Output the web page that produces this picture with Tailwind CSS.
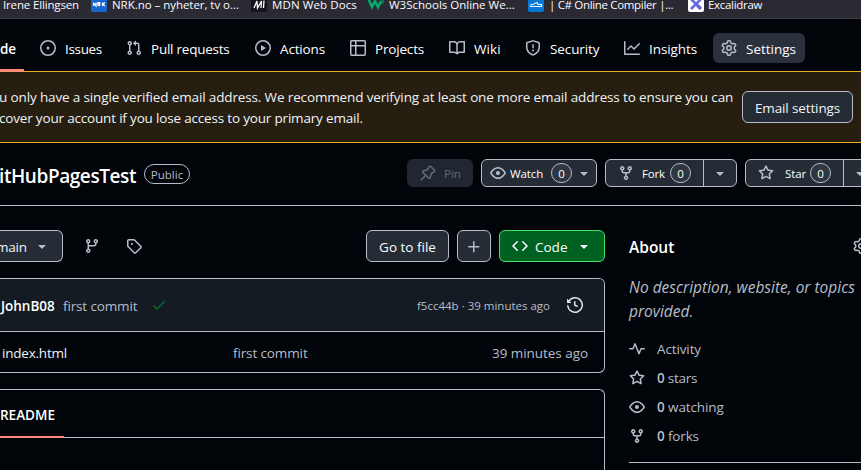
<!DOCTYPE html>
<html lang="en">
<head>
<meta charset="utf-8">
<title>GitHubPagesTest</title>
<script src="https://cdn.jsdelivr.net/npm/@tailwindcss/browser@4"></script>
</head>
<body class="w-[861px] h-[470px] overflow-hidden bg-[#010409] text-white font-['Open_Sans','Noto_Sans',sans-serif] text-[13.5px] leading-5 whitespace-nowrap">
<svg class="hidden">
  <symbol id="issue" viewBox="0 0 16 16"><path d="M8 9.5a1.5 1.5 0 1 0 0-3 1.5 1.5 0 0 0 0 3Z"/><path d="M8 0a8 8 0 1 1 0 16A8 8 0 0 1 8 0ZM1.5 8a6.500 6.500 0 1 0 13 0 6.500 6.500 0 0 0-13 0Z"/></symbol>
  <symbol id="pull" viewBox="0 0 16 16"><path d="M1.5 3.250a2.250 2.250 0 1 1 3 2.122v5.256a2.251 2.251 0 1 1-1.500 0V5.372A2.250 2.250 0 0 1 1.500 3.250Zm5.677-.177L9.573.677A.25.25 0 0 1 10 .854V2.500h1A2.500 2.500 0 0 1 13.500 5v5.628a2.251 2.251 0 1 1-1.500 0V5a1 1 0 0 0-1-1h-1v1.646a.25.25 0 0 1-.427.177L7.177 3.427a.25.25 0 0 1 0-.354ZM3.750 2.500a.75.75 0 1 0 0 1.500.75.75 0 0 0 0-1.500Zm0 9.500a.75.75 0 1 0 0 1.500.75.75 0 0 0 0-1.500Zm8.250.75a.75.75 0 1 0 1.500 0 .75.75 0 0 0-1.500 0Z"/></symbol>
  <symbol id="play" viewBox="0 0 16 16"><path d="M8 0a8 8 0 1 1 0 16A8 8 0 0 1 8 0ZM1.500 8a6.500 6.500 0 1 0 13 0 6.500 6.500 0 0 0-13 0Zm4.879-2.773 4.264 2.559a.25.25 0 0 1 0 .428l-4.264 2.559A.25.25 0 0 1 6 10.559V5.442a.25.25 0 0 1 .379-.215Z"/></symbol>
  <symbol id="table" viewBox="0 0 16 16"><path d="M0 1.750C0 .784.784 0 1.750 0h12.500C15.216 0 16 .784 16 1.750v12.500A1.750 1.750 0 0 1 14.250 16H1.750A1.750 1.750 0 0 1 0 14.250ZM6.500 6.500v8h7.750a.25.25 0 0 0 .25-.25V6.500Zm8-1.500V1.750a.25.25 0 0 0-.25-.25H6.500V5Zm-13 1.500v7.750c0 .138.112.25.25.25H5v-8ZM5 5V1.500H1.750a.25.25 0 0 0-.25.25V5Z"/></symbol>
  <symbol id="book" viewBox="0 0 16 16"><path d="M0 1.750A.75.75 0 0 1 .75 1h4.253c1.227 0 2.317.59 3 1.501A3.743 3.743 0 0 1 11.006 1h4.245a.75.75 0 0 1 .75.75v10.500a.75.75 0 0 1-.75.75h-4.507a2.250 2.250 0 0 0-1.591.659l-.622.621a.75.75 0 0 1-1.060 0l-.622-.621A2.250 2.250 0 0 0 5.258 13H.75a.75.75 0 0 1-.75-.75Zm7.251 10.324.004-5.073-.002-2.253A2.250 2.250 0 0 0 5.003 2.500H1.500v9h3.757a3.750 3.750 0 0 1 1.994.574ZM8.755 4.750l-.004 7.322a3.752 3.752 0 0 1 1.992-.572H14.500v-9h-3.495a2.250 2.250 0 0 0-2.250 2.250Z"/></symbol>
  <symbol id="shield" viewBox="0 0 16 16"><path d="M7.467.133a1.748 1.748 0 0 1 1.066 0l5.250 1.680A1.750 1.750 0 0 1 15 3.480V7c0 1.566-.32 3.182-1.303 4.682-.983 1.498-2.585 2.813-5.032 3.855a1.697 1.697 0 0 1-1.330 0c-2.447-1.042-4.049-2.357-5.032-3.855C1.320 10.182 1 8.566 1 7V3.480a1.755 1.755 0 0 1 1.217-1.667Zm.61 1.429a.25.25 0 0 0-.153 0l-5.250 1.680a.25.25 0 0 0-.174.238V7c0 1.358.275 2.666 1.057 3.860.784 1.194 2.121 2.340 4.366 3.297a.196.196 0 0 0 .154 0c2.245-.956 3.582-2.104 4.366-3.298C13.225 9.666 13.500 8.360 13.500 7V3.480a.251.251 0 0 0-.174-.237l-5.250-1.680ZM8.750 4.750v3a.75.75 0 0 1-1.500 0v-3a.75.75 0 0 1 1.500 0ZM9 10.500a1 1 0 1 1-2 0 1 1 0 0 1 2 0Z"/></symbol>
  <symbol id="graph" viewBox="0 0 16 16"><path d="M1.500 1.750V13.500h13.750a.75.75 0 0 1 0 1.500H.75a.75.75 0 0 1-.75-.75V1.750a.75.75 0 0 1 1.500 0Zm14.280 2.530-5.250 5.250a.75.75 0 0 1-1.060 0L7 7.060 4.280 9.780a.751.751 0 0 1-1.060-1.060l3.250-3.250a.75.75 0 0 1 1.060 0L10 7.940l4.720-4.720a.751.751 0 0 1 1.060 1.060Z"/></symbol>
  <symbol id="gear" viewBox="0 0 16 16"><path d="M8 0a8.200 8.200 0 0 1 .701.031C9.444.095 9.990.645 10.160 1.290l.288 1.107c.018.066.079.158.212.224.231.114.454.243.668.386.123.082.233.090.299.071l1.103-.303c.644-.176 1.392.021 1.820.63.270.385.506.792.704 1.218.315.675.111 1.422-.364 1.891l-.814.806c-.049.048-.098.147-.088.294.016.257.016.515 0 .772-.010.147.038.246.088.294l.814.806c.475.469.679 1.216.364 1.891a7.977 7.977 0 0 1-.704 1.217c-.428.610-1.176.807-1.820.630l-1.102-.302c-.067-.019-.177-.011-.300.071a5.909 5.909 0 0 1-.668.386c-.133.066-.194.158-.211.224l-.290 1.106c-.168.646-.715 1.196-1.458 1.260a8.006 8.006 0 0 1-1.402 0c-.743-.064-1.289-.614-1.458-1.260l-.289-1.106c-.018-.066-.079-.158-.212-.224a5.738 5.738 0 0 1-.668-.386c-.123-.082-.233-.090-.299-.071l-1.103.303c-.644.176-1.392-.021-1.820-.630a8.120 8.120 0 0 1-.704-1.218c-.315-.675-.111-1.422.363-1.891l.815-.806c.050-.048.098-.147.088-.294a6.214 6.214 0 0 1 0-.772c.010-.147-.038-.246-.088-.294l-.815-.806C.635 6.045.431 5.298.746 4.623a7.920 7.920 0 0 1 .704-1.217c.428-.610 1.176-.807 1.820-.630l1.102.302c.067.019.177.011.300-.071.214-.143.437-.272.668-.386.133-.066.194-.158.211-.224l.290-1.106C6.009.645 6.556.095 7.299.030 7.530.010 7.764 0 8 0Zm-.571 1.525c-.036.003-.108.036-.137.146l-.289 1.105c-.147.561-.549.967-.998 1.189-.173.086-.340.183-.500.290-.417.278-.970.423-1.529.270l-1.103-.303c-.109-.030-.175.016-.195.045-.220.312-.412.644-.573.990-.014.031-.021.110.059.190l.815.806c.411.406.562.957.530 1.456a4.709 4.709 0 0 0 0 .582c.032.499-.119 1.050-.530 1.456l-.815.806c-.081.080-.073.159-.059.190.162.346.353.677.573.989.020.030.085.076.195.046l1.102-.303c.560-.153 1.113-.008 1.530.270.161.107.328.204.501.290.447.222.850.629.997 1.189l.289 1.105c.029.109.101.143.137.146a6.600 6.600 0 0 0 1.142 0c.036-.003.108-.036.137-.146l.289-1.105c.147-.561.549-.967.998-1.189.173-.086.340-.183.500-.290.417-.278.970-.423 1.529-.270l1.103.303c.109.029.175-.016.195-.045.220-.313.411-.644.573-.990.014-.031.021-.110-.059-.190l-.815-.806c-.411-.406-.562-.957-.530-1.456a4.709 4.709 0 0 0 0-.582c-.032-.499.119-1.050.530-1.456l.815-.806c.081-.080.073-.159.059-.190a6.464 6.464 0 0 0-.573-.989c-.020-.030-.085-.076-.195-.046l-1.102.303c-.560.153-1.113.008-1.530-.270a4.440 4.440 0 0 0-.501-.290c-.447-.222-.850-.629-.997-1.189l-.289-1.105c-.029-.110-.101-.143-.137-.146a6.600 6.600 0 0 0-1.142 0ZM11 8a3 3 0 1 1-6 0 3 3 0 0 1 6 0ZM9.500 8a1.500 1.500 0 1 0-3.001.001A1.500 1.500 0 0 0 9.500 8Z"/></symbol>
  <symbol id="pin" viewBox="0 0 16 16"><path d="m11.294.984 3.722 3.722a1.750 1.750 0 0 1-.504 2.826l-1.327.613a3.089 3.089 0 0 0-1.707 2.084l-.584 2.454c-.317 1.332-1.972 1.800-2.940.832L5.750 11.311 1.780 15.280a.749.749 0 1 1-1.060-1.060l3.969-3.970-2.204-2.204c-.968-.968-.5-2.623.832-2.940l2.454-.584a3.080 3.080 0 0 0 2.084-1.707l.613-1.327a1.750 1.750 0 0 1 2.826-.504ZM6.283 9.723l2.732 2.731a.25.25 0 0 0 .420-.119l.584-2.454a4.586 4.586 0 0 1 2.537-3.098l1.328-.613a.25.25 0 0 0 .072-.404l-3.722-3.722a.25.25 0 0 0-.404.072l-.613 1.328a4.584 4.584 0 0 1-3.098 2.537l-2.454.584a.25.25 0 0 0-.119.420l2.731 2.732Z"/></symbol>
  <symbol id="eye" viewBox="0 0 16 16"><path d="M8 2c1.981 0 3.671.992 4.933 2.078 1.270 1.091 2.187 2.345 2.637 3.023a1.620 1.620 0 0 1 0 1.798c-.450.678-1.367 1.932-2.637 3.023C11.670 13.008 9.981 14 8 14c-1.981 0-3.671-.992-4.933-2.078C1.797 10.830.880 9.576.430 8.898a1.620 1.620 0 0 1 0-1.798c.450-.677 1.367-1.931 2.637-3.022C4.330 2.992 6.019 2 8 2ZM1.679 7.932a.120.120 0 0 0 0 .136c.411.622 1.241 1.750 2.366 2.717C5.176 11.758 6.527 12.500 8 12.500c1.473 0 2.825-.742 3.955-1.715 1.124-.967 1.954-2.096 2.366-2.717a.120.120 0 0 0 0-.136c-.412-.621-1.242-1.750-2.366-2.717C10.824 4.242 9.473 3.500 8 3.500c-1.473 0-2.825.742-3.955 1.715-1.124.967-1.954 2.096-2.366 2.717ZM8 10a2 2 0 1 1-.001-3.999A2 2 0 0 1 8 10Z"/></symbol>
  <symbol id="fork" viewBox="0 0 16 16"><path d="M5 5.372v.878c0 .414.336.75.75.75h4.500a.75.75 0 0 0 .75-.75v-.878a2.250 2.250 0 1 1 1.500 0v.878a2.250 2.250 0 0 1-2.250 2.250h-1.500v2.128a2.251 2.251 0 1 1-1.500 0V8.500h-1.500A2.250 2.250 0 0 1 3.500 6.250v-.878a2.250 2.250 0 1 1 1.500 0ZM5 3.250a.75.75 0 1 0-1.500 0 .75.75 0 0 0 1.500 0Zm6.750.75a.75.75 0 1 0 0-1.500.75.75 0 0 0 0 1.500Zm-3 8.750a.75.75 0 1 0-1.500 0 .75.75 0 0 0 1.500 0Z"/></symbol>
  <symbol id="star" viewBox="0 0 16 16"><path d="M8 .25a.75.75 0 0 1 .673.418l1.882 3.815 4.210.612a.75.75 0 0 1 .416 1.279l-3.046 2.970.719 4.192a.751.751 0 0 1-1.088.791L8 12.347l-3.766 1.980a.75.75 0 0 1-1.088-.790l.720-4.194L.818 6.374a.75.75 0 0 1 .416-1.280l4.210-.611L7.327.668A.75.75 0 0 1 8 .25Zm0 2.445L6.615 5.500a.75.75 0 0 1-.564.410l-3.097.450 2.240 2.184a.75.75 0 0 1 .216.664l-.528 3.084 2.769-1.456a.75.75 0 0 1 .698 0l2.770 1.456-.530-3.084a.75.75 0 0 1 .216-.664l2.240-2.183-3.096-.450a.75.75 0 0 1-.564-.410Z"/></symbol>
  <symbol id="branch" viewBox="0 0 16 16"><path d="M9.500 3.250a2.250 2.250 0 1 1 3 2.122V6A2.500 2.500 0 0 1 10 8.500H6a1 1 0 0 0-1 1v1.128a2.251 2.251 0 1 1-1.500 0V5.372a2.250 2.250 0 1 1 1.500 0v1.836A2.493 2.493 0 0 1 6 7h4a1 1 0 0 0 1-1v-.628A2.250 2.250 0 0 1 9.500 3.250Zm-6 0a.75.75 0 1 0 1.500 0 .75.75 0 0 0-1.500 0Zm8.250-.75a.75.75 0 1 0 0 1.500.75.75 0 0 0 0-1.500ZM4.250 12a.75.75 0 1 0 0 1.500.75.75 0 0 0 0-1.500Z"/></symbol>
  <symbol id="tag" viewBox="0 0 16 16"><path d="M1 7.775V2.750C1 1.784 1.784 1 2.750 1h5.025c.464 0 .910.184 1.238.513l6.250 6.250a1.750 1.750 0 0 1 0 2.474l-5.026 5.026a1.750 1.750 0 0 1-2.474 0l-6.250-6.250A1.752 1.752 0 0 1 1 7.775Zm1.500 0c0 .066.026.130.073.177l6.250 6.250a.25.25 0 0 0 .354 0l5.025-5.025a.25.25 0 0 0 0-.354l-6.250-6.250a.25.25 0 0 0-.177-.073H2.750a.25.25 0 0 0-.25.25ZM6 5a1 1 0 1 1 0 2 1 1 0 0 1 0-2Z"/></symbol>
  <symbol id="plus" viewBox="0 0 16 16"><path d="M7.750 2a.75.75 0 0 1 .75.75V7h4.250a.75.75 0 0 1 0 1.500H8.500v4.250a.75.75 0 0 1-1.500 0V8.500H2.750a.75.75 0 0 1 0-1.500H7V2.750A.75.75 0 0 1 7.750 2Z"/></symbol>
  <symbol id="code" viewBox="0 0 16 16"><path d="m11.280 3.220 4.250 4.250a.75.75 0 0 1 0 1.060l-4.250 4.250a.751.751 0 0 1-1.060-1.060L13.940 8l-3.720-3.720a.751.751 0 0 1 1.060-1.060Zm-6.560 0a.751.751 0 0 1 1.060 1.060L2.060 8l3.720 3.720a.751.751 0 0 1-1.060 1.060L.470 8.530a.75.75 0 0 1 0-1.060Z"/></symbol>
  <symbol id="caret" viewBox="0 0 16 16"><path d="m4.427 7.427 3.396 3.396a.25.25 0 0 0 .354 0l3.396-3.396A.25.25 0 0 0 11.396 7H4.604a.25.25 0 0 0-.177.427Z"/></symbol>
  <symbol id="check" viewBox="0 0 16 16"><path d="M13.780 4.220a.75.75 0 0 1 0 1.060l-7.250 7.250a.75.75 0 0 1-1.060 0L2.220 9.280a.751.751 0 0 1 1.060-1.060L6 10.940l6.720-6.720a.75.75 0 0 1 1.060 0Z"/></symbol>
  <symbol id="history" viewBox="0 0 16 16"><path d="m.427 1.927 1.215 1.215a8.002 8.002 0 1 1-1.600 5.685.75.75 0 1 1 1.493-.154 6.500 6.500 0 1 0 1.180-4.458l1.358 1.358A.25.25 0 0 1 3.896 6H.25A.25.25 0 0 1 0 5.750V2.104a.25.25 0 0 1 .427-.177ZM7.750 4a.75.75 0 0 1 .75.75v2.992l2.028.812a.75.75 0 0 1-.557 1.392l-2.500-1A.751.751 0 0 1 7 8.250v-3.500A.75.75 0 0 1 7.750 4Z"/></symbol>
  <symbol id="pulse" viewBox="0 0 16 16"><path d="M6 2c.306 0 .582.187.696.471L10 10.731l1.304-3.260A.751.751 0 0 1 12 7h3.250a.75.75 0 0 1 0 1.500h-2.742l-1.812 4.528a.751.751 0 0 1-1.392 0L6 4.770 4.696 8.030A.75.75 0 0 1 4 8.500H.75a.75.75 0 0 1 0-1.500h2.742l1.812-4.529A.751.751 0 0 1 6 2Z"/></symbol>
</svg>

<!-- Browser bookmarks bar -->
<div class="h-[19px] bg-[#2b2a33] border-b border-[#3c3b45] flex text-[11.5px] leading-[10px] text-[#fbfbfe]">
  <div class="w-[91px] shrink-0 pl-[3px] tracking-[-0.15px]">Irene Ellingsen</div>
  <div class="w-[160px] shrink-0 flex">
    <svg class="w-4 h-4 -mt-1 mr-[5px]" viewBox="0 0 16 16"><rect width="16" height="16" rx="2" fill="#1767ce"/><path d="M2.500 10V6.500M2.500 7l2.500 3V6.500M7 10V6.500h1.700v1.700H7l2 1.800M11.500 6.500V10M13.800 6.500l-1.800 1.700 1.800 1.800" stroke="#fff" stroke-width="1.200" fill="none"/></svg>
    <span class="tracking-[-0.04px]">NRK.no – nyheter, tv o...</span>
  </div>
  <div class="w-[117px] shrink-0 flex">
    <svg class="w-4 h-4 -mt-1 mr-[5px]" viewBox="0 0 16 16"><rect width="16" height="16" fill="#15141a"/><path d="M3 12 6 5 6.500 12 10.500 5 10 12M13 4.500 12.500 12" stroke="#fff" stroke-width="1.300" fill="none"/></svg>
    <span class="tracking-[0.1px]">MDN Web Docs</span>
  </div>
  <div class="w-[160px] shrink-0 flex">
    <svg class="w-4 h-4 -mt-1 mr-[5px]" viewBox="0 0 16 16"><path d="M0 2 4 11 7 5l3 6 3-6" stroke="#04aa6d" stroke-width="2.600" fill="none"/><path d="M13.500 4h2l-1 1.500 1 .5-.5 1.500h-1.500" stroke="#04aa6d" stroke-width=".8" fill="none"/></svg>
    <span>W3Schools Online We...</span>
  </div>
  <div class="w-[160px] shrink-0 flex">
    <svg class="w-4 h-4 -mt-1 mr-[5px]" viewBox="0 0 16 16"><rect width="16" height="16" rx="2" fill="#0878d4"/><path d="M2 10.500h11.500v-2H10L9 6.500 6 8l-4 1.200" stroke="#e8f4ff" stroke-width="1.200" fill="none"/></svg>
    <span class="tracking-[-0.33px]">| C# Online Compiler |...</span>
  </div>
  <div class="flex">
    <svg class="w-4 h-4 -mt-1 mr-[4px]" viewBox="0 0 16 16"><rect width="16" height="16" rx="2" fill="#fff"/><path d="M3 3l10 10M12.500 3.500 3 13" stroke="#6965db" stroke-width="2.600"/><path d="M8.500 10.500l3 3M10.500 8.500l3 3" stroke="#6965db" stroke-width="1"/></svg>
    <span class="tracking-[-0.3px]">Excalidraw</span>
  </div>
</div>

<!-- Repository navigation -->
<nav class="h-[52px] flex items-center pt-[6px] relative [&_svg]:w-4 [&_svg]:h-4 [&_svg]:fill-[#b7bdc8] [&_svg]:shrink-0 [&_span]:pt-[2px]">
  <div class="w-10 shrink-0 font-semibold"><span class="block tracking-[-0.2px]">de</span></div>
  <div class="w-[86px] shrink-0 flex items-center gap-[9px]"><svg><use href="#issue"/></svg><span class="tracking-[-0.33px]">Issues</span></div>
  <div class="w-[129px] shrink-0 flex items-center gap-[9px]"><svg><use href="#pull"/></svg><span class="tracking-[-0.24px]">Pull requests</span></div>
  <div class="w-[95px] shrink-0 flex items-center gap-[9px]"><svg><use href="#play"/></svg><span class="tracking-[-0.16px]">Actions</span></div>
  <div class="w-[99px] shrink-0 flex items-center gap-[9px]"><svg><use href="#table"/></svg><span class="tracking-[-0.18px]">Projects</span></div>
  <div class="w-[76px] shrink-0 flex items-center gap-[9px]"><svg><use href="#book"/></svg><span class="tracking-[0.1px]">Wiki</span></div>
  <div class="w-[99px] shrink-0 flex items-center gap-[9px]"><svg><use href="#shield"/></svg><span class="tracking-[-0.1px]">Security</span></div>
  <div class="w-[89px] shrink-0 flex items-center gap-[9px]"><svg><use href="#graph"/></svg><span class="tracking-[-0.08px]">Insights</span></div>
  <div class="w-[92px] h-[30px] shrink-0 flex items-center gap-[9px] pl-2 rounded-md bg-[#2a313c]"><svg><use href="#gear"/></svg><span>Settings</span></div>
  <div class="absolute left-0 -bottom-px w-6 h-[3px] bg-[#ff8a75] z-10"></div>
</nav>

<!-- Email warning -->
<section class="h-[72px] flex border-y border-[#edaa27] bg-[#261e11] text-[#f0f3f6] leading-[21px]">
  <div class="w-[742px] shrink-0 pt-[15px]">
    <p class="tracking-[-0.14px] -ml-px">u only have a single verified email address. We recommend verifying at least one more email address to ensure you can</p>
    <p class="tracking-[-0.18px] -ml-px">cover your account if you lose access to your primary email.</p>
  </div>
  <button class="mt-[19px] w-[111px] h-8 shrink-0 rounded-md border border-[#b7bdc8] bg-[#262c36] pt-[2px] leading-5 tracking-[-0.13px]">Email settings</button>
</section>

<!-- Repository title and actions -->
<header class="h-[63px] flex pt-4 border-b border-[#b7bdc8] [&_svg]:w-4 [&_svg]:h-4 [&_svg]:fill-[#b7bdc8] [&_svg]:shrink-0 text-[11.5px]">
  <h1 class="w-[145px] -ml-px shrink-0 text-[19px] leading-[34px] font-semibold tracking-[-0.42px]">itHubPagesTest</h1>
  <span class="w-[46px] h-5 mt-[5px] shrink-0 rounded-full border border-[#b7bdc8] text-center text-[#b7bdc8] leading-5">Public</span>
  <div class="ml-[217px] w-[66px] h-7 shrink-0 rounded-md bg-[#212730] flex items-center pl-[13px] gap-2 text-[#656c76]"><svg class="!fill-[#656c76]"><use href="#pin"/></svg><span class="pt-[2px]">Pin</span></div>
  <div class="ml-2 w-[116px] h-7 shrink-0 rounded-md border border-[#b7bdc8] bg-[#262c36] flex items-center pl-2 font-medium"><svg><use href="#eye"/></svg><span class="pt-[2px] w-[33px] ml-[4px] tracking-[-0.1px]">Watch</span><span class="ml-[8px] w-[21px] h-5 rounded-full border border-[#b7bdc8] bg-[#2f3742] text-center leading-5">0</span><svg class="ml-[4px]"><use href="#caret"/></svg></div>
  <div class="ml-2 w-[132px] h-7 shrink-0 rounded-md border border-[#b7bdc8] bg-[#262c36] flex items-center pl-3 font-medium"><svg><use href="#fork"/></svg><span class="pt-[2px] w-[23px] ml-[8px] tracking-[-0.15px]">Fork</span><span class="ml-[5px] w-[21px] h-5 rounded-full border border-[#b7bdc8] bg-[#2f3742] text-center leading-5">0</span><div class="ml-3 h-full border-l border-[#b7bdc8] flex items-center pl-2"><svg><use href="#caret"/></svg></div></div>
  <div class="ml-2 w-[132px] h-7 shrink-0 rounded-md border border-[#b7bdc8] bg-[#262c36] flex items-center pl-3 font-medium"><svg><use href="#star"/></svg><span class="pt-[2px] w-[22px] ml-[11px] tracking-[-0.1px]">Star</span><span class="ml-[3px] w-[21px] h-5 rounded-full border border-[#b7bdc8] bg-[#2f3742] text-center leading-5">0</span><div class="ml-3 h-full border-l border-[#b7bdc8] flex items-center pl-2"><svg><use href="#caret"/></svg></div></div>
</header>

<main class="h-[264px] flex [&_svg]:w-4 [&_svg]:h-4 [&_svg]:fill-[#b7bdc8] [&_svg]:shrink-0">
  <div class="w-[605px] shrink-0 pt-6">
    <div class="h-8 flex items-center">
      <div class="w-[63px] h-8 shrink-0 rounded-r-md border border-l-0 border-[#b7bdc8] bg-[#262c36] flex items-center overflow-hidden"><span class="w-[38px] shrink-0 -ml-[4px] pt-[2px] tracking-[-0.2px] text-[#f0f3f6]">main</span><svg><use href="#caret"/></svg></div>
      <svg class="ml-[21px]"><use href="#branch"/></svg>
      <svg class="ml-[26px]"><use href="#tag"/></svg>
      <button class="ml-[224px] w-[83px] h-8 shrink-0 rounded-md border border-[#b7bdc8] bg-[#262c36] pt-[2px]">Go to file</button>
      <div class="ml-2 w-[34px] h-8 shrink-0 rounded-md border border-[#b7bdc8] bg-[#262c36] grid place-items-center pt-[2px]"><svg><use href="#plus"/></svg></div>
      <div class="ml-2 w-[106px] h-8 shrink-0 rounded-md border border-[#4ae168] bg-[#006222] flex items-center pl-3"><svg class="!fill-white"><use href="#code"/></svg><span class="ml-[7px] w-[34px] pt-[2px]">Code</span><svg class="!fill-white ml-[7px]"><use href="#caret"/></svg></div>
    </div>

    <div class="mt-4 h-[95px] rounded-r-md border border-l-0 border-[#b7bdc8] overflow-hidden">
      <div class="h-[53px] border-b border-[#b7bdc8] bg-[#151b23] flex items-center text-[#b7bdc8]">
        <b class="w-[63px] pl-px shrink-0 font-semibold text-white pt-px">JohnB08</b>
        <span class="w-[88px] shrink-0 tracking-[-0.14px] pt-px">first commit</span>
        <svg class="!fill-[#08692a]"><use href="#check"/></svg>
        <span class="w-[150px] ml-[250px] shrink-0 text-[11.5px] pt-[2px]">f5cc44b · 39 minutes ago</span>
        <svg class="!fill-[#dde1e6]"><use href="#history"/></svg>
      </div>
      <div class="h-10 flex items-center pt-px text-[#b7bdc8]">
        <span class="w-[233px] pl-[2px] shrink-0 text-[#f0f3f6] tracking-[-0.22px]">index.html</span>
        <span class="w-[259px] shrink-0 tracking-[-0.12px]">first commit</span>
        <span class="tracking-[-0.05px]">39 minutes ago</span>
      </div>
    </div>

    <div class="mt-4 h-[81px] rounded-tr-md border-t border-r border-[#b7bdc8]">
      <div class="h-12 border-b border-[#b7bdc8] relative flex items-center pt-[3px]"><b class="font-semibold">README</b><div class="absolute left-0 -bottom-px w-16 h-[2px] bg-[#ff8a75]"></div></div>
    </div>
  </div>

  <aside class="ml-6 w-[232px] shrink-0 pt-[29px] text-[#b7bdc8]">
    <div class="flex"><h2 class="w-[224px] shrink-0 text-[15.500px] leading-6 font-semibold text-white">About</h2><svg class="mt-[3px]"><use href="#gear"/></svg></div>
    <p class="mt-4 italic text-[15.500px] leading-6">No description, website, or topics<br>provided.</p>
    <div class="mt-[11px] flex flex-col [&>div]:h-[29px] [&>div]:flex [&>div]:items-center [&>div]:gap-3 [&_b]:font-semibold">
      <div><svg><use href="#pulse"/></svg><span class="tracking-[-0.12px]">Activity</span></div>
      <div><svg><use href="#star"/></svg><span class="tracking-[-0.25px]"><b>0</b> stars</span></div>
      <div><svg><use href="#eye"/></svg><span class="tracking-[-0.1px]"><b>0</b> watching</span></div>
      <div><svg><use href="#fork"/></svg><span class="tracking-[-0.15px]"><b>0</b> forks</span></div>
    </div>
    <div class="mt-[12px] h-px bg-[#b7bdc8]"></div>
  </aside>
</main>
</body>
</html>
